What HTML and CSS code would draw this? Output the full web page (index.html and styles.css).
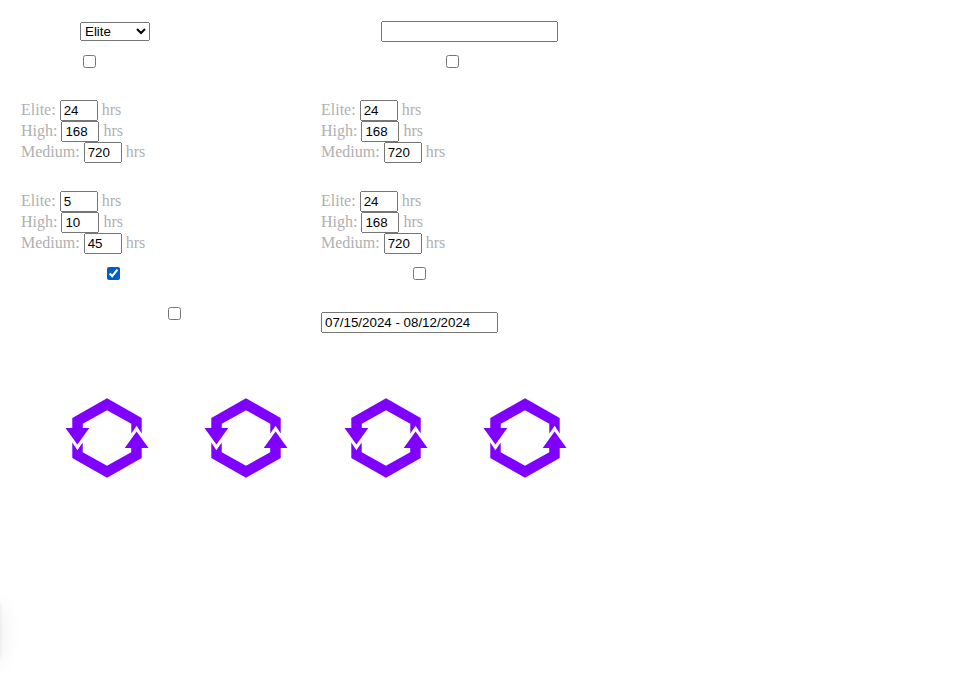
FILE: index.html
```html
<!DOCTYPE html>
<html lang="en">
<head>
<meta charset="utf-8">
<title>Settings</title>
<link rel="stylesheet" href="styles.css">
</head>
<body>
<svg class="defs" width="0" height="0" aria-hidden="true">
  <symbol id="cycle" viewBox="0 0 84 80">
    <path id="half" d="M42 .2 76.7 20V35.5L71.6 27.8 66.3 35.5V25.8L42 12.2 17.8 25.8V30H24.3L12.4 46.6.5 30H7.3V20Z"/>
    <use href="#half" transform="rotate(180 42 40)"/>
  </symbol>
</svg>
<form class="settings">
  <div class="cell row-top tier"><select><option>Elite</option></select></div>
  <div class="cell row-top name"><input type="text" class="wide"></div>
  <div class="cell row-check check-a"><input type="checkbox"></div>
  <div class="cell row-check check-b"><input type="checkbox"></div>
  <div class="cell hours">
    <div>Elite: <input type="text" value="24"> hrs</div>
    <div>High: <input type="text" value="168"> hrs</div>
    <div>Medium: <input type="text" value="720"> hrs</div>
  </div>
  <div class="cell hours">
    <div>Elite: <input type="text" value="24"> hrs</div>
    <div>High: <input type="text" value="168"> hrs</div>
    <div>Medium: <input type="text" value="720"> hrs</div>
  </div>
  <div class="cell hours">
    <div>Elite: <input type="text" value="5"> hrs</div>
    <div>High: <input type="text" value="10"> hrs</div>
    <div>Medium: <input type="text" value="45"> hrs</div>
  </div>
  <div class="cell hours">
    <div>Elite: <input type="text" value="24"> hrs</div>
    <div>High: <input type="text" value="168"> hrs</div>
    <div>Medium: <input type="text" value="720"> hrs</div>
  </div>
  <div class="cell row-mid check-c"><input type="checkbox" checked></div>
  <div class="cell row-mid check-d"><input type="checkbox"></div>
  <div class="cell row-last check-e"><input type="checkbox"></div>
  <div class="cell row-date"><input type="text" class="wide" value="07/15/2024 - 08/12/2024"></div>
</form>
<div class="loaders">
  <svg><use href="#cycle"/></svg>
  <svg><use href="#cycle"/></svg>
  <svg><use href="#cycle"/></svg>
  <svg><use href="#cycle"/></svg>
</div>
<div class="drawer"></div>
</body>
</html>
```
FILE: styles.css
```css
* { box-sizing: border-box; }
body {
  margin: 0;
  height: 680px;
  overflow: hidden;
  background: #fff;
  color: #b0b0b0;
  font: 16px "Liberation Serif", serif;
}
.defs { display: block; }
.settings {
  display: grid;
  grid-template-columns: 300px 300px;
  grid-template-rows: 34px 45px 91px 76px 40px 53px;
  padding: 21px 0 0 21px;
}
input, select { font: 13.333px "Liberation Sans", sans-serif; }
input[type="text"] { width: 38px; height: 21px; }
input[type="text"].wide { display: block; width: 177px; }
input[type="checkbox"] { display: block; width: 13px; height: 13px; margin: 0; accent-color: #005cc8; }
select { display: block; width: 70px; height: 19px; }
.tier { padding: 1px 0 0 59px; }
.name { padding-left: 60px; }
.check-a { padding-left: 62px; }
.check-b { padding-left: 125px; }
.hours div { height: 21px; line-height: 20px; white-space: nowrap; }
.check-c { padding-left: 86px; }
.check-d { padding-left: 92px; }
.check-e { padding-left: 147px; }
.row-date { padding-top: 5px; }
.loaders {
  display: grid;
  grid-template-columns: repeat(4, 139.33px);
  justify-items: center;
  margin: 38px 0 0 37.4px;
}
.loaders svg { display: block; width: 84px; height: 80px; fill: #7f00ff; }
.drawer {
  position: absolute;
  left: -100px;
  top: 604px;
  width: 100px;
  height: 54px;
  box-shadow: 0 0 3px rgba(0, 0, 0, .1), 0 2px 24px rgba(0, 0, 0, .08);
}
```
